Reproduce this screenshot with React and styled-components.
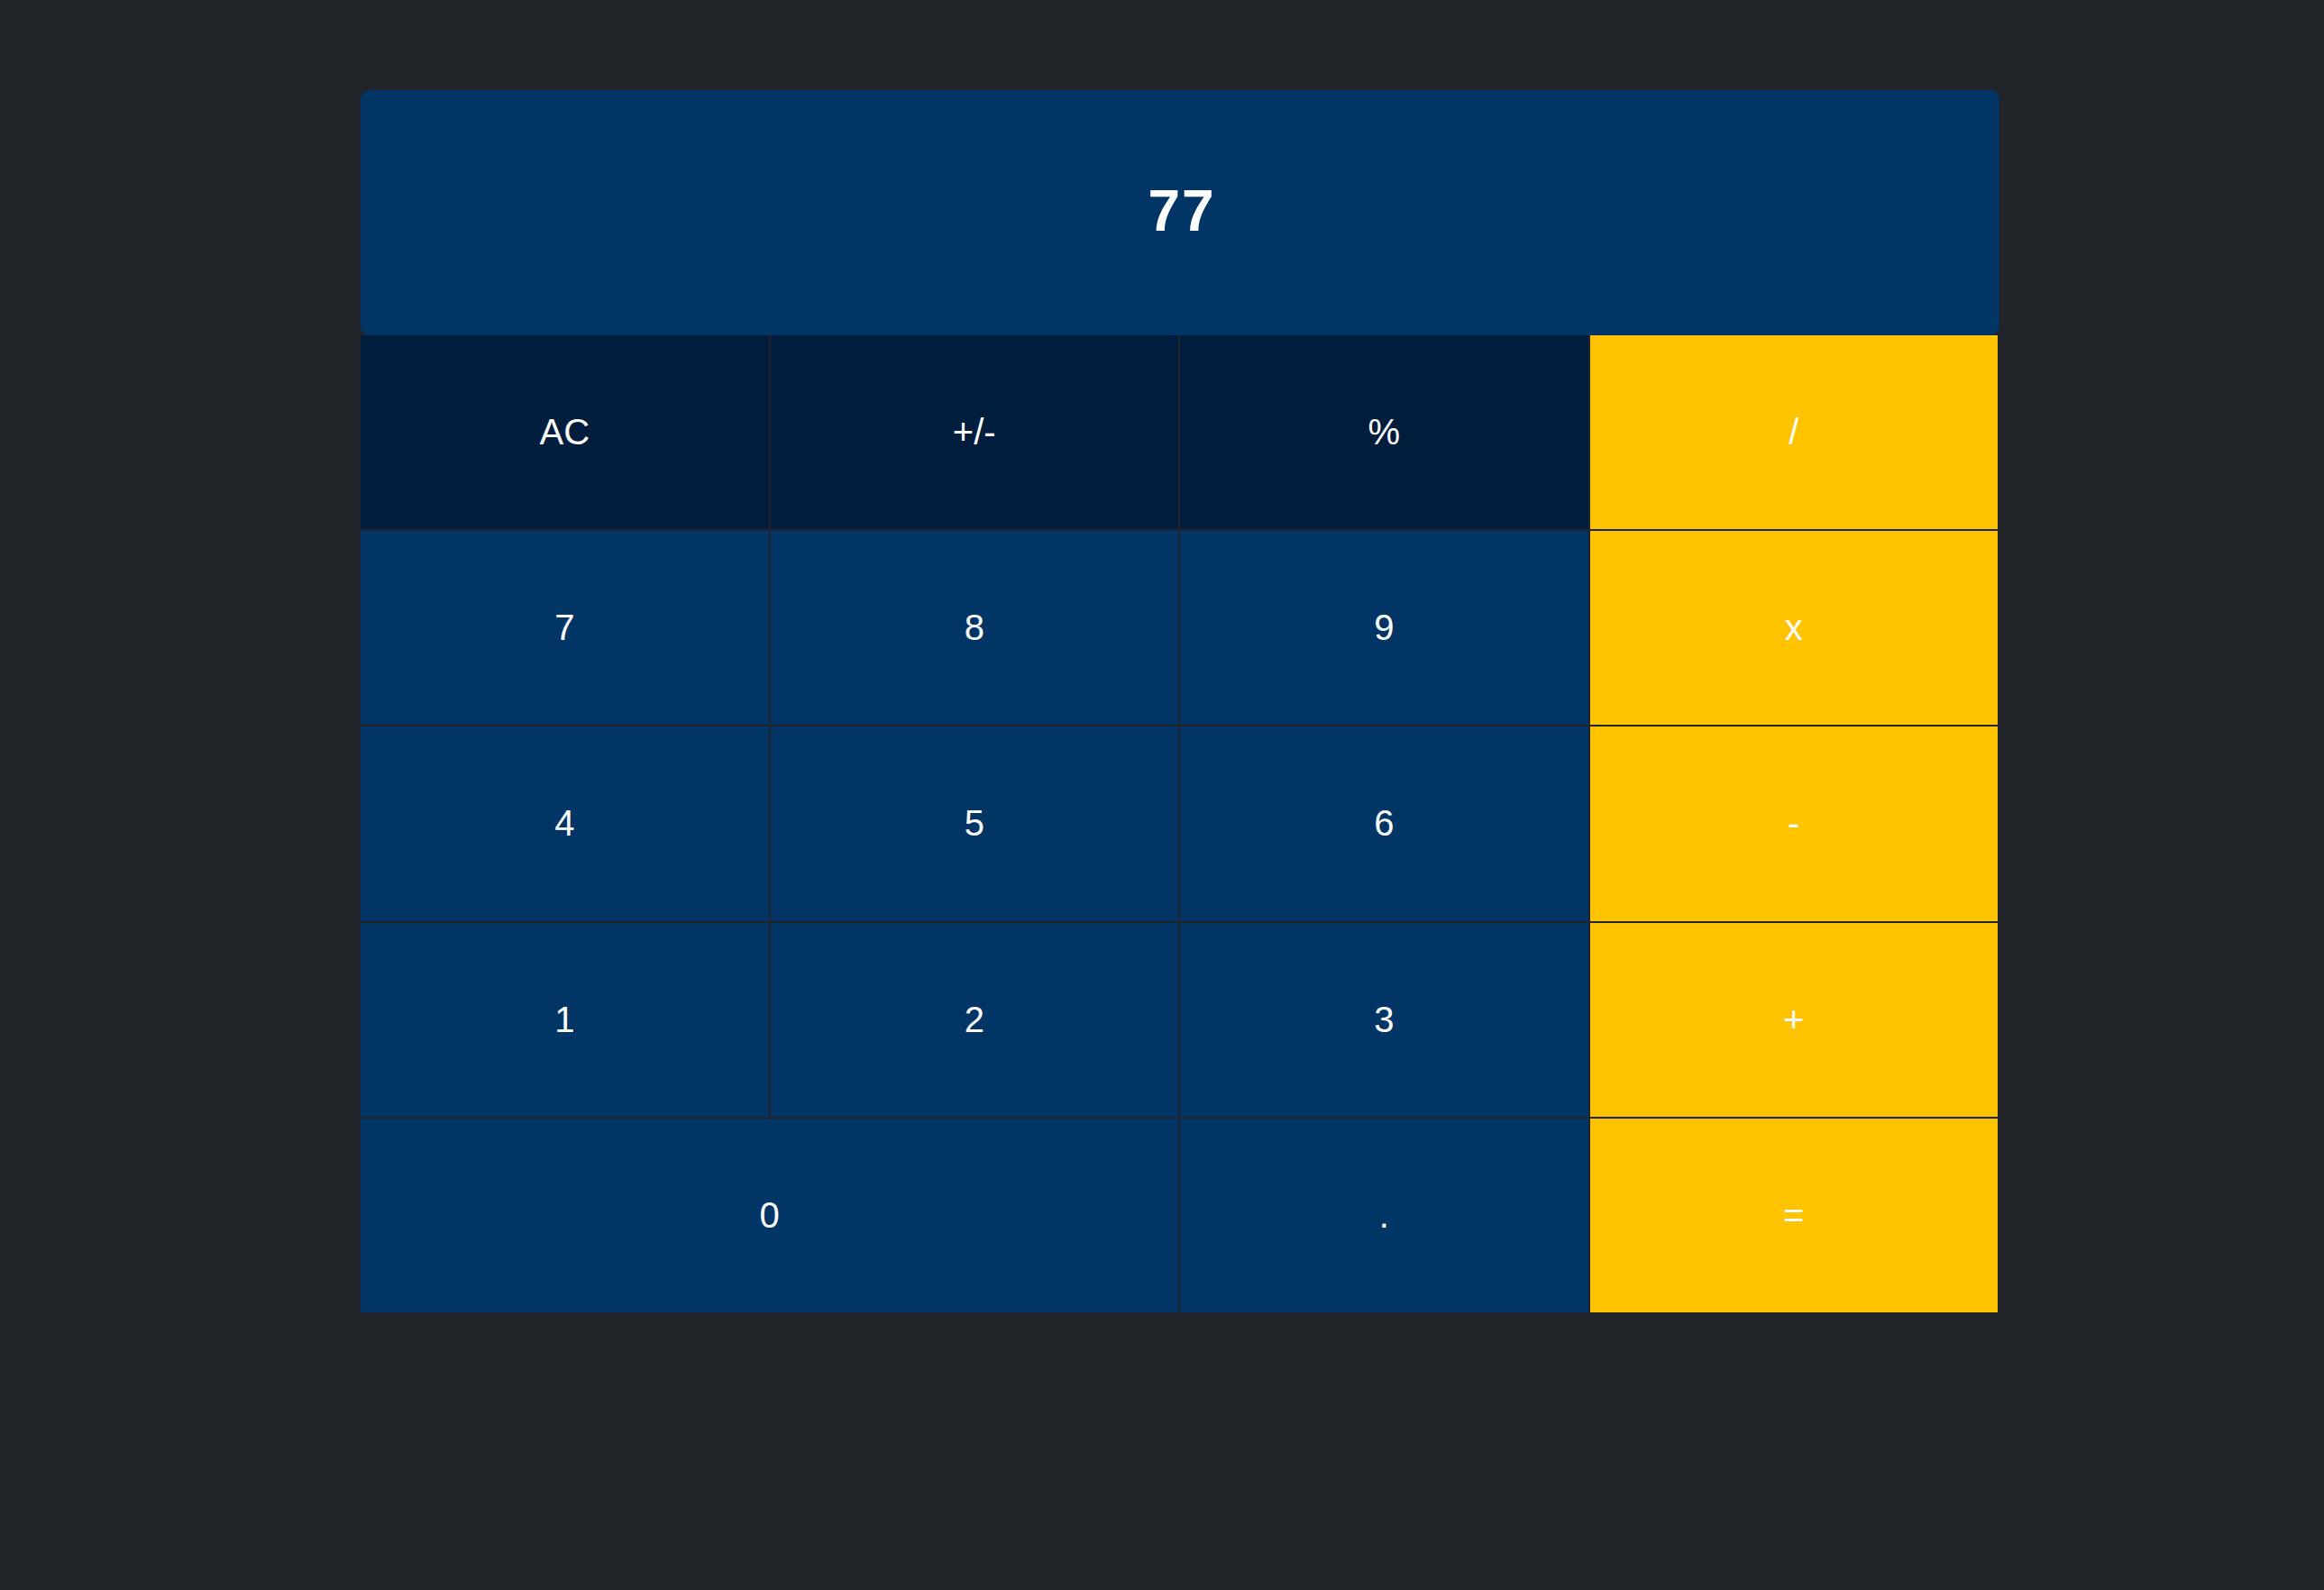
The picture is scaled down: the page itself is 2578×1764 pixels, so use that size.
import React from "react";
import styled, { createGlobalStyle } from "styled-components";

const Global = createGlobalStyle`
  html, body {
    margin: 0;
    padding: 0;
    background: #212529;
    font-family: "Liberation Sans", Arial, sans-serif;
  }
  body { min-height: 1764px; }
`;

const Page = styled.div`
  padding: 100px 0 0 400px;
`;

const Calculator = styled.div`
  width: 1818px;
  display: flex;
  flex-direction: column;
`;

const Display = styled.div`
  height: 272px;
  background: #003566;
  border-radius: 10px;
  color: #fff;
  font-size: 64px;
  font-weight: 700;
  letter-spacing: 2px;
  display: flex;
  align-items: center;
  justify-content: center;
  padding: 0 0 4px 4px;
  box-sizing: border-box;
`;

const Keys = styled.div`
  width: 1816px;
  height: 1084px;
  display: grid;
  grid-template-columns: repeat(4, 1fr);
  grid-template-rows: repeat(5, 1fr);
  gap: 2px;
  background: #212529;
`;

const Key = styled.button`
  border: none;
  margin: 0;
  padding: 0;
  font-family: "Liberation Sans", Arial, sans-serif;
  font-size: 40px;
  color: #fff;
  display: flex;
  align-items: center;
  justify-content: center;
  grid-column: span ${(p) => p.$span || 1};
  background: ${(p) =>
    p.$kind === "op" ? "#ffc300" : p.$kind === "fn" ? "#001d3d" : "#003566"};
`;

const rows = [
  [["AC", "fn"], ["+/-", "fn"], ["%", "fn"], ["/", "op"]],
  [["7"], ["8"], ["9"], ["x", "op"]],
  [["4"], ["5"], ["6"], ["-", "op"]],
  [["1"], ["2"], ["3"], ["+", "op"]],
  [["0", "num", 2], ["."], ["=", "op"]],
];

export default function App() {
  return (
    <>
      <Global />
      <Page>
        <Calculator>
          <Display>77</Display>
          <Keys>
            {rows.flat().map(([label, kind, span]) => (
              <Key key={label} $kind={kind} $span={span}>
                {label}
              </Key>
            ))}
          </Keys>
        </Calculator>
      </Page>
    </>
  );
}
